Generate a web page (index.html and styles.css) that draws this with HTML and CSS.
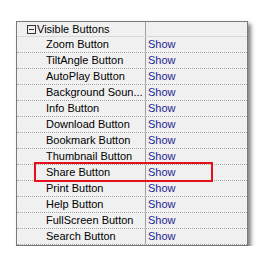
FILE: index.html
```html
<!DOCTYPE html>
<html lang="en">
<head>
    <meta charset="UTF-8">
    <meta name="viewport" content="width=device-width, initial-scale=1.0">
    <title>Visible Buttons</title>
    <link rel="stylesheet" href="styles.css">
</head>
<body>
    <div class="grid">
        <div class="row category">
            <div class="name"><span class="toggle"></span>Visible Buttons</div>
            <div class="value"></div>
        </div>
        <div class="row"><div class="name">Zoom Button</div><div class="value">Show</div></div>
        <div class="row"><div class="name">TiltAngle Button</div><div class="value">Show</div></div>
        <div class="row"><div class="name">AutoPlay Button</div><div class="value">Show</div></div>
        <div class="row"><div class="name">Background Soun...</div><div class="value">Show</div></div>
        <div class="row"><div class="name">Info Button</div><div class="value">Show</div></div>
        <div class="row"><div class="name">Download Button</div><div class="value">Show</div></div>
        <div class="row"><div class="name">Bookmark Button</div><div class="value">Show</div></div>
        <div class="row"><div class="name">Thumbnail Button</div><div class="value">Show</div></div>
        <div class="row"><div class="name">Share Button</div><div class="value">Show</div></div>
        <div class="row"><div class="name">Print Button</div><div class="value">Show</div></div>
        <div class="row"><div class="name">Help Button</div><div class="value">Show</div></div>
        <div class="row"><div class="name">FullScreen Button</div><div class="value">Show</div></div>
        <div class="row"><div class="name">Search Button</div><div class="value">Show</div></div>

        <!-- highlight around the share row -->
        <div class="highlight"></div>
    </div>
</body>
</html>
```

FILE: styles.css
```css
body {
    font-family: "Liberation Sans", Arial, sans-serif;
    font-size: 11px;
    margin: 0;
    padding: 0;
    background-color: #fff;
    color: #000;
}
.grid {
    position: relative;
    width: 230px;
    margin: 21px 0 0 16px;
    border: 1px solid #7a7a7a;
    background-color: #f0f0f0;
    box-shadow: 3px 3px 4px rgba(0, 0, 0, 0.5);
}
.row {
    display: flex;
    height: 15px;
    line-height: 15px;
    border-bottom: 1px dotted #a8a8a8;
}
.name {
    width: 129px;
    padding-left: 29px;
    box-sizing: border-box;
    white-space: nowrap;
    overflow: hidden;
    border-right: 1px solid #a0a0a0;
}
.value {
    flex: 1;
    padding-left: 2px;
    color: #1f1f96;
}
.category {
    height: 14px;
    line-height: 14px;
    border-bottom: 1px solid #d8d8d8;
}
.category .name {
    padding-left: 10px;
    display: flex;
    align-items: center;
}
.toggle {
    position: relative;
    width: 7px;
    height: 7px;
    border: 1px solid #333;
    margin-right: 1px;
}
.toggle::after {
    content: "";
    position: absolute;
    left: 1px;
    right: 1px;
    top: 3px;
    height: 1px;
    background-color: #333;
}
.highlight {
    position: absolute;
    left: 17px;
    top: 140px;
    width: 175px;
    height: 16px;
    border: 2px solid #e8101a;
}
```
